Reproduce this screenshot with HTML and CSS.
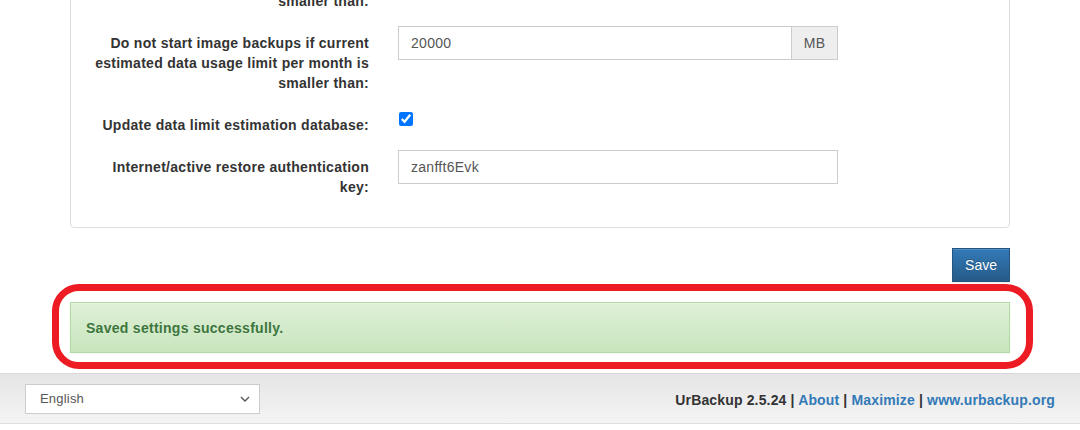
FILE: index.html
```html
<!DOCTYPE html>
<html>
<head>
<meta charset="utf-8">
<link rel="stylesheet" href="styles.css">
</head>
<body>
<div class="container">
  <div class="panel">
    <div class="panel-body">
      <div class="form-row">
        <div class="label-col"><span class="control-label">Do not start file backups if current estimated data usage limit per month is smaller than:</span></div>
        <div class="field-col">
          <div class="input-group"><div class="input">10000</div><div class="addon">MB</div></div>
        </div>
      </div>
      <div class="form-row">
        <div class="label-col"><span class="control-label">Do not start image backups if current estimated data usage limit per month is smaller than:</span></div>
        <div class="field-col">
          <div class="input-group"><div class="input">20000</div><div class="addon">MB</div></div>
        </div>
      </div>
      <div class="form-row">
        <div class="label-col"><span class="control-label">Update data limit estimation database:</span></div>
        <div class="field-col">
          <input class="check" type="checkbox" checked>
        </div>
      </div>
      <div class="form-row">
        <div class="label-col"><span class="control-label">Internet/active restore authentication key:</span></div>
        <div class="field-col">
          <div class="input full">zanfft6Evk</div>
        </div>
      </div>
    </div>
  </div>
  <div class="actions">
    <button class="btn-primary">Save</button>
  </div>
  <div class="alert-wrap">
    <div class="alert">Saved settings successfully.</div>
    <div class="highlight"></div>
  </div>
</div>
<footer class="footer">
  <div class="select">
    <span>English</span>
    <svg width="10" height="6" viewBox="0 0 10 6"><path d="M1 1 L5 5 L9 1" fill="none" stroke="#555" stroke-width="1.4"/></svg>
  </div>
  <div class="footer-links">
    UrBackup 2.5.24 | <a href="#">About</a> | <a href="#">Maximize</a> | <a href="#">www.urbackup.org</a>
  </div>
</footer>
</body>
</html>
```

FILE: styles.css
```css
* { box-sizing: border-box; }
html, body { margin: 0; padding: 0; background: #fff; }
body {
  font-family: "Liberation Sans", Arial, Helvetica, sans-serif;
  font-size: 14px;
  line-height: 20px;
  letter-spacing: 0.28px;
  color: #333;
  overflow: hidden;
}
.container {
  width: 940px;
  margin: 0 auto;
}
.panel {
  margin-top: -72px;
  border: 1px solid #ddd;
  border-radius: 4px;
  margin-bottom: 20px;
}
.panel-body {
  padding: 15px 0;
}
.form-row {
  display: flex;
  margin-bottom: 15px;
}
.label-col {
  width: 312px;
  padding: 7px 14px 0 15px;
  text-align: right;
}
.control-label {
  font-weight: bold;
  color: #333;
}
.field-col {
  width: 470px;
  padding: 0 15px;
}
.input-group {
  display: flex;
  height: 34px;
}
.input {
  flex: 1;
  height: 34px;
  border: 1px solid #ccc;
  padding: 6px 12px;
  color: #555;
  background: #fff;
}
.input.full { width: 100%; }
.addon {
  width: 46px;
  height: 34px;
  border: 1px solid #ccc;
  border-left: 0;
  background: #eee;
  color: #555;
  text-align: center;
  padding: 6px 0;
}
.check {
  margin: 4px 0 0 1px;
  width: 14px;
  height: 14px;
}
.actions {
  display: flex;
  justify-content: flex-end;
  margin-bottom: 20px;
}
.btn-primary {
  font-family: "Liberation Sans", Arial, sans-serif;
  font-size: 14px;
  line-height: 20px;
  letter-spacing: 0;
  height: 34px;
  padding: 6px 12px;
  color: #fff;
  border: 1px solid #245580;
  border-radius: 0;
  background: linear-gradient(to bottom, #337ab7 0, #265a88 100%);
  box-shadow: inset 0 1px 0 rgba(255,255,255,.15), 0 1px 1px rgba(0,0,0,.075);
  text-shadow: 0 -1px 0 rgba(0,0,0,.2);
}
.alert-wrap {
  position: relative;
  margin-bottom: 20px;
}
.alert {
  border: 1px solid #b2dba1;
  background: linear-gradient(to bottom, #dff0d8 0, #c8e5bc 100%);
  color: #3c763d;
  font-weight: bold;
  padding: 15px 15px;
  height: 51px;
  box-shadow: inset 0 1px 0 rgba(255,255,255,.25), 0 1px 2px rgba(0,0,0,.05);
  text-shadow: 0 1px 0 rgba(255,255,255,.2);
}
.highlight {
  position: absolute;
  left: -18px;
  top: -18px;
  right: -23px;
  bottom: -16px;
  border: 7px solid #ed1c24;
  border-radius: 27px;
  pointer-events: none;
}
.footer {
  height: 51px;
  border-top: 1px solid #d8d8d8;
  border-bottom: 1px solid #ddd;
  background: linear-gradient(to bottom, #e5e5e5 0, #f4f4f4 100%);
  display: flex;
  align-items: center;
  justify-content: space-between;
  padding: 0 25px 0 25px;
}
.select {
  width: 235px;
  height: 30px;
  border: 1px solid #ccc;
  background: #fff;
  display: flex;
  align-items: center;
  justify-content: space-between;
  padding: 0 9px 0 14px;
  font-size: 13px;
  letter-spacing: 0.2px;
  color: #555;
}
.footer-links {
  font-weight: bold;
  color: #333;
  letter-spacing: 0.15px;
  padding-top: 2px;
}
.footer-links a {
  color: #337ab7;
  text-decoration: none;
}
```
